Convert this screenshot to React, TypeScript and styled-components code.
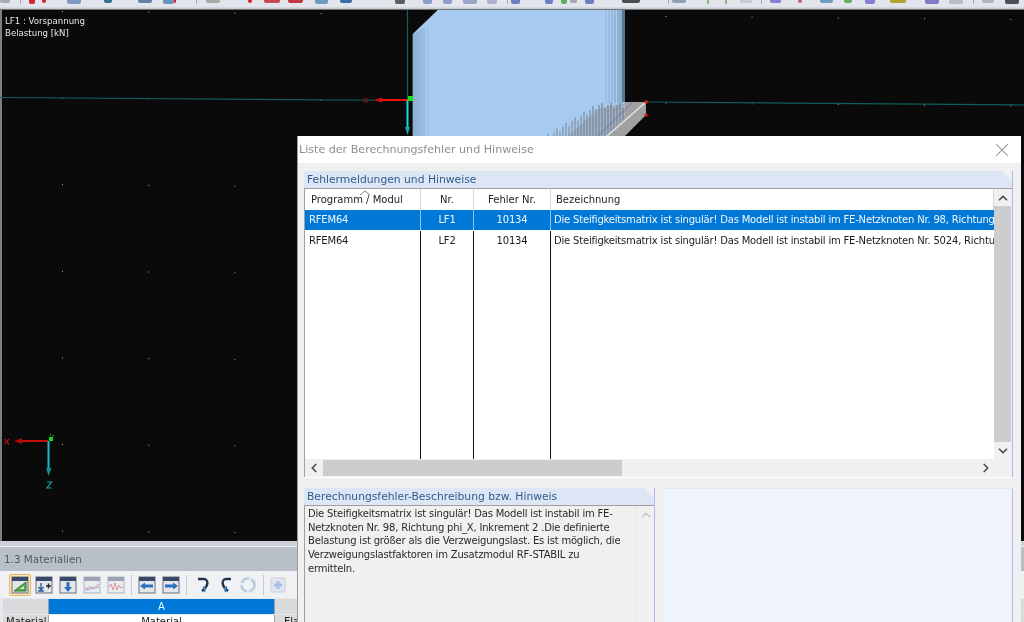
import React from 'react';
import styled, { createGlobalStyle } from 'styled-components';
import { ChevronUp, ChevronDown, ChevronLeft, ChevronRight, X } from 'lucide-react';

const GlobalStyle = createGlobalStyle`
  html, body { margin: 0; padding: 0; background: #000; overflow: hidden; }
  * { box-sizing: border-box; }
`;

const Page = styled.div`
  position: relative;
  width: 1024px;
  height: 622px;
  overflow: hidden;
  display: flex;
  flex-direction: column;
  font-family: 'DejaVu Sans', sans-serif;
  filter: blur(0.35px);
`;

/* main toolbar, only the lower edge of its icons is visible */
const TopBar = styled.div`
  height: 10px;
  flex-shrink: 0;
  display: flex;
  align-items: flex-start;
  background: linear-gradient(#e2e5ec 70%, #c4c8cf);
  border-bottom: 1px solid #6f7277;
  overflow: hidden;
`;

const TopGlyph = styled.div<{ $gap: number; $w: number; $h: number; $c: string }>`
  flex-shrink: 0;
  margin-left: ${(p) => p.$gap}px;
  width: ${(p) => p.$w}px;
  height: ${(p) => p.$h}px;
  background: ${(p) => p.$c};
  border-radius: 0 0 2px 2px;
`;

const topGlyphs: [number, number, string][] = [
  [0, 10, '#a8adb4'], [20, 1, '#a5a9b0'], [29, 6, '#d9232d'], [42, 4, '#d9232d'], [67, 14, '#7d9cc0'],
  [104, 8, '#34708f'], [138, 14, '#5f83ad'], [163, 11, '#6c93bd'], [174, 2, '#d9232d'], [196, 1, '#a5a9b0'],
  [206, 14, '#a8a8a4'], [248, 4, '#e0202a'], [264, 16, '#c8464e'], [288, 15, '#c23a40'], [315, 13, '#6d9cbf'],
  [340, 12, '#3a6ea8'], [395, 10, '#5d5f60'], [423, 9, '#8d9dc9'], [443, 9, '#8d9dc9'], [463, 14, '#9aa6c4'],
  [487, 10, '#aab2cc'], [507, 1, '#a5a9b0'], [511, 9, '#6d7fc0'], [545, 8, '#6d7fc0'], [561, 6, '#5cae5c'],
  [570, 7, '#a3a8b0'], [585, 9, '#6d7fc0'], [622, 18, '#4a4c4e'], [668, 1, '#a5a9b0'], [672, 14, '#8da2b8'],
  [707, 2, '#7ab87a'], [725, 2, '#7ab87a'], [740, 12, '#c5c9d0'], [761, 1, '#a5a9b0'], [770, 11, '#8080d8'],
  [798, 4, '#c06a6a'], [820, 13, '#6d9cbf'], [844, 8, '#62b060'], [865, 10, '#8080d8'], [890, 16, '#b5a030'],
  [925, 14, '#7c7cc8'], [949, 14, '#b5bcc8'], [973, 1, '#a5a9b0'], [982, 12, '#b0b4bc'], [1005, 14, '#4c5058'],
];

/* 3D viewport */
const Viewport = styled.div`
  position: relative;
  height: 531px;
  flex-shrink: 0;
  background: #0a0a0a;
  border-left: 2px solid #7c7f84;
`;

const Scene = styled.svg`
  position: absolute;
  left: -2px;
  top: 0;
  width: 1024px;
  height: 531px;
`;

const LoadLabel = styled.div`
  position: absolute;
  left: 3px;
  top: 5px;
  color: #e8e8e8;
  font-size: 8.6px;
  line-height: 12px;
`;

const toothXs = Array.from({ length: 26 }, (_, i) => 548 + i * 3);

const toothTop = (x: number, i: number) => Math.max(103, 134 - (x - 548) * 0.62) + (i % 3 === 1 ? 5 : i % 3 === 2 ? 2 : 0);

const ViewportScene = () => (
  <Scene viewBox="0 10 1024 531">
    {Array.from({ length: 12 }, (_, i) =>
      Array.from({ length: 7 }, (_, j) => (
        <rect key={`${i}-${j}`} x={62 + 86.2 * i} y={11 + 86.6 * j + i * 0.72} width="1" height="1" fill="#a8b0a8" />
      )),
    )}
    <line x1="0" y1="97.5" x2="415" y2="100.5" stroke="#0f5f5c" strokeWidth="1.2" />
    <line x1="646" y1="102" x2="1024" y2="105" stroke="#0f5f5c" strokeWidth="1.2" />
    <line x1="407.5" y1="10" x2="407.5" y2="100" stroke="#0f5f5c" strokeWidth="1.2" />

    <polygon points="413,34 438,10 625,10 625,136 413,136" fill="#a6caf0" />
    {[0, 2, 4, 6].map((k) => (
      <line key={k} x1={413 + k * 2} y1={34 - k * 0.2} x2={438 + k * 2} y2="10" stroke="#c8dbf1" strokeWidth="0.6" opacity={0.8 - k * 0.07} />
    ))}
    {[413, 415, 417, 419, 421, 423, 425, 428].map((x, i) => (
      <line key={x} x1={x} y1={34 - i * 1.2} x2={x} y2="136" stroke="#6f8fb0" strokeWidth="1" opacity={0.95 - i * 0.1} />
    ))}
    {[606, 609, 612, 615, 618, 620, 622].map((x, i) => (
      <line key={x} x1={x} y1="10" x2={x} y2="103" stroke="#6f8aa8" strokeWidth="1.2" opacity={0.25 + i * 0.1} />
    ))}
    <rect x="622" y="10" width="3" height="92" fill="#5d7690" />

    <polygon points="568,136 600,108 625,103 625,136" fill="#8d959c" opacity="0.45" />
    {toothXs.map((x, i) => (
      <line key={x} x1={x} y1={toothTop(x, i)} x2={x} y2="136" stroke="#7d8288" strokeWidth="1.4" opacity={0.6 + i * 0.012} />
    ))}
    <polygon points="607,136 625,118 625,102 646,102 646,115 625,136" fill="#a0a0a0" />
    <line x1="646" y1="102" x2="607" y2="136" stroke="#e2e2e2" strokeWidth="1.6" />
    <line x1="632" y1="103" x2="598" y2="136" stroke="#6a6ab0" strokeWidth="0.7" />
    <rect x="644.5" y="100.5" width="3" height="3" fill="#f01818" />
    <rect x="644.5" y="113.5" width="3" height="3" fill="#e81818" />

    <line x1="408" y1="100" x2="382" y2="100" stroke="#f00d0d" strokeWidth="2" />
    <polygon points="374,100 382,97.5 382,102.5" fill="#d00c0c" />
    <path d="M363.5 98l4 5M367.5 98l-4 5" stroke="#8a1414" strokeWidth="1.2" />
    <line x1="407.5" y1="100" x2="407.5" y2="128" stroke="#18d8e0" strokeWidth="2" />
    <polygon points="405,127 410,127 407.5,135" fill="#12a8ae" />
    <rect x="408" y="96" width="5" height="5" fill="#16e016" />

    <line x1="48" y1="441" x2="22" y2="441" stroke="#c80c0c" strokeWidth="2" />
    <polygon points="14,441 22,438 22,444" fill="#b00c0c" />
    <path d="M4.5 439l4.5 5.5M9 439l-4.5 5.5" stroke="#9c1212" strokeWidth="1.3" />
    <line x1="48.5" y1="441" x2="48.5" y2="469" stroke="#12c0c8" strokeWidth="2" />
    <polygon points="46,468 51.5,468 48.5,476" fill="#0e9096" />
    <rect x="49" y="437" width="4" height="4" fill="#18d818" />
    <path d="M52 437l2-2M50 436l1-2" stroke="#18a018" strokeWidth="1" />
    <path d="M47 482h4.5l-4.5 6h4.5" stroke="#12a4aa" strokeWidth="1.2" fill="none" />
  </Scene>
);

/* table panel below the viewport */
const BottomPanel = styled.div`
  flex: 1;
  background: #e6e8ec;
  border-top: 5px solid #cdd0d6;
  display: flex;
  flex-direction: column;
  position: relative;
`;

const PanelTitle = styled.div`
  height: 25px;
  flex-shrink: 0;
  background: #b9bfc9;
  color: #555a62;
  font-size: 10.4px;
  line-height: 25px;
  padding-left: 4px;
  border-top: 1px solid #eef0f3;
`;

const PanelTools = styled.div`
  height: 27px;
  flex-shrink: 0;
  display: flex;
  align-items: center;
  padding-left: 9px;
  background: #eff1f5;
`;

const ToolButton = styled.div<{ $active?: boolean; $gap?: number; $faded?: boolean }>`
  width: 22px;
  height: 22px;
  flex-shrink: 0;
  margin-left: ${(p) => p.$gap ?? 2}px;
  display: flex;
  align-items: center;
  justify-content: center;
  opacity: ${(p) => (p.$faded ? 0.45 : 1)};
  border: 1px solid ${(p) => (p.$active ? '#e8b860' : 'transparent')};
  background: ${(p) => (p.$active ? '#fbe7b8' : 'transparent')};
  border-radius: 2px;
`;

const ToolSep = styled.div`
  width: 1px;
  height: 20px;
  flex-shrink: 0;
  margin-left: 4px;
  background: #c4c8d0;
`;

const SheetRow = styled.div`
  display: grid;
  grid-template-columns: 45px 225px 1fr;
  gap: 1px;
  height: 15px;
  flex-shrink: 0;
  margin-left: 3px;
  margin-top: 1px;
  background: #9ca0a6;
`;

const SheetHead = styled.div<{ $blue?: boolean }>`
  background: ${(p) => (p.$blue ? '#0078d7' : '#d9dadc')};
  color: #dff;
  font-size: 10px;
  line-height: 15px;
  text-align: center;
  overflow: hidden;
`;

const SheetCell = styled.div<{ $head?: boolean; $pad?: number }>`
  background: ${(p) => (p.$head ? '#d9dadc' : '#fff')};
  color: #222;
  font-size: 10px;
  line-height: 14px;
  text-align: ${(p) => (p.$pad !== undefined ? 'left' : 'center')};
  padding-left: ${(p) => p.$pad ?? 0}px;
  overflow: hidden;
  white-space: nowrap;
`;

/* dialog */
const Dialog = styled.div`
  position: absolute;
  left: 297px;
  top: 136px;
  width: 724px;
  height: 486px;
  background: #f0f0f0;
  border-left: 1px solid #9a9a9a;
  display: flex;
  flex-direction: column;
`;

const DialogTitle = styled.div`
  height: 27px;
  flex-shrink: 0;
  background: #fff;
  color: #8e8e8e;
  font-size: 11.1px;
  line-height: 27px;
  padding-left: 1px;
  display: flex;
  justify-content: space-between;
  align-items: center;
  padding-right: 8px;
`;

const DialogBody = styled.div`
  flex: 1;
  padding: 8px 8px 0 6px;
  display: flex;
  flex-direction: column;
  min-height: 0;
`;

const SectionHead = styled.div`
  height: 17px;
  flex-shrink: 0;
  background: #dde6f5;
  color: #2f5b8e;
  font-size: 10.75px;
  line-height: 17px;
  padding-left: 3px;
  clip-path: polygon(0 0, calc(100% - 10px) 0, 100% 10px, 100% 100%, 0 100%);
  white-space: nowrap;
`;

const ListSection = styled.section`
  flex-shrink: 0;
  border-right: 1px solid #b4b4fa;
  border-bottom: 1px solid #fff;
`;

const ListBox = styled.div`
  border-left: 1px solid #a0a0a0;
  border-top: 1px solid #a0a0a0;
  display: grid;
  grid-template-columns: 689px 17px;
  grid-template-rows: 270px 18px;
`;

const Table = styled.div`
  background: #fff;
  overflow: hidden;
  display: flex;
  flex-direction: column;
  position: relative;
`;

const TableRow = styled.div<{ $h?: number; $fill?: boolean }>`
  display: grid;
  grid-template-columns: 116px 53px 77px 443px;
  flex: ${(p) => (p.$fill ? 1 : 'none')};
  height: ${(p) => (p.$h ? `${p.$h}px` : 'auto')};
`;

const HeadCell = styled.div<{ $center?: boolean; $pad?: number }>`
  font-size: 10px;
  line-height: 21px;
  color: #222;
  text-align: ${(p) => (p.$center ? 'center' : 'left')};
  padding-left: ${(p) => p.$pad ?? 0}px;
  border-right: 1px solid #d8d8d8;
`;

const BodyCell = styled.div<{ $selected?: boolean; $center?: boolean; $pad?: number; $last?: boolean }>`
  font-size: 10px;
  letter-spacing: -0.19px;
  line-height: 20px;
  white-space: nowrap;
  overflow: hidden;
  text-align: ${(p) => (p.$center ? 'center' : 'left')};
  padding-left: ${(p) => p.$pad ?? 0}px;
  color: ${(p) => (p.$selected ? '#f2f8ff' : '#1a1a1a')};
  background: ${(p) => (p.$selected ? '#0078d7' : '#fff')};
  border-right: ${(p) => (p.$last ? 'none' : `1px solid ${p.$selected ? '#8cc4f0' : '#111'}`)};
  margin-bottom: ${(p) => (p.$selected ? 1 : 0)}px;
`;

const FillCell = styled.div`
  border-right: 1px solid #111;
  &:last-child { border-right: none; }
`;

const SortCaret = styled.svg`
  position: absolute;
  left: 54px;
  top: 1px;
`;

const VScroll = styled.div`
  background: #f0f0f0;
  display: flex;
  flex-direction: column;
  align-items: center;
  justify-content: space-between;
  color: #505050;
`;

const VThumb = styled.div`
  flex: 1;
  width: 17px;
  background: #cdcdcd;
`;

const ArrowCell = styled.div`
  height: 17px;
  width: 17px;
  flex-shrink: 0;
  display: flex;
  align-items: center;
  justify-content: center;
`;

const HScroll = styled.div`
  background: #f0f0f0;
  display: flex;
  align-items: center;
  justify-content: space-between;
  color: #505050;
`;

const HTrack = styled.div`
  flex: 1;
  height: 16px;
`;

const HThumb = styled.div`
  width: 299px;
  height: 16px;
  margin-left: 1px;
  background: #cdcdcd;
`;

const Corner = styled.div`
  background: #f0f0f0;
`;

const LowerRow = styled.div`
  flex: 1;
  margin-top: 10px;
  display: flex;
  gap: 8px;
  min-height: 0;
`;

const HintSection = styled.section`
  width: 351px;
  flex-shrink: 0;
  display: flex;
  flex-direction: column;
  border-right: 1px solid #b4b4fa;
`;

const HintBox = styled.div`
  flex: 1;
  border-left: 1px solid #a0a0a0;
  border-top: 1px solid #a0a0a0;
  display: grid;
  grid-template-columns: 1fr 18px;
`;

const HintText = styled.div`
  font-size: 10px;
  letter-spacing: -0.19px;
  line-height: 13.7px;
  color: #2a2a2a;
  padding: 1px 10px 0 3px;
`;

const HintScroll = styled.div`
  border-left: 1px solid #e6e6e6;
  color: #c4c4c4;
  display: flex;
  flex-direction: column;
  align-items: center;
`;

const PreviewPanel = styled.div`
  flex: 1;
  background: #eff3fa;
  border-top: 1px solid #dde6f5;
  border-right: 1px solid #b4b4fa;
`;

const IconTable = ({ children }: { children: React.ReactNode }) => (
  <svg width="18" height="18" viewBox="0 0 18 18">
    <rect x="1" y="1" width="16" height="16" fill="#e4e6ea" stroke="#6a6e74" />
    <rect x="1" y="1" width="16" height="4" fill="#38486a" />
    {children}
  </svg>
);

const COLUMNS = ['Programm / Modul', 'Nr.', 'Fehler Nr.', 'Bezeichnung'];

const ROWS = [
  {
    program: 'RFEM64',
    nr: 'LF1',
    code: '10134',
    text: 'Die Steifigkeitsmatrix ist singulär! Das Modell ist instabil im FE-Netzknoten Nr. 98, Richtung phi_X, Inkrement 2',
  },
  {
    program: 'RFEM64',
    nr: 'LF2',
    code: '10134',
    text: 'Die Steifigkeitsmatrix ist singulär! Das Modell ist instabil im FE-Netzknoten Nr. 5024, Richtung phi_X, Inkrement 2',
  },
];

export default function App() {
  return (
    <Page>
      <GlobalStyle />
      <TopBar>
        {topGlyphs.map(([x, w, c], i) => {
          const prev = i === 0 ? 0 : topGlyphs[i - 1][0] + topGlyphs[i - 1][1];
          return <TopGlyph key={x} $gap={x - prev} $w={w} $h={w === 1 ? 4 : 3 + (x % 2)} $c={c} />;
        })}
      </TopBar>

      <Viewport>
        <ViewportScene />
        <LoadLabel>
          LF1 : Vorspannung
          <br />
          Belastung [kN]
        </LoadLabel>
      </Viewport>

      <BottomPanel>
        <PanelTitle>1.3 Materialien</PanelTitle>
        <PanelTools>
          <ToolButton $active $gap={0}>
            <IconTable>
              <polygon points="3,15 15,15 15,6" fill="#58b04c" stroke="#2e7a2a" />
              <polygon points="9,13 13,13 13,10" fill="#e4e6ea" />
            </IconTable>
          </ToolButton>
          <ToolButton>
            <IconTable>
              <path d="M6 7v6M3.5 11L6 14l2.5-3M3 15h6" stroke="#2f5f9e" fill="none" strokeWidth="1.4" />
              <path d="M11 10h5M13.5 7.5v5" stroke="#2a2a2a" strokeWidth="1.4" />
            </IconTable>
          </ToolButton>
          <ToolButton>
            <IconTable>
              <path d="M9 6v8" stroke="#2f6fc0" strokeWidth="3" />
              <polygon points="5,11 13,11 9,16" fill="#2f6fc0" />
            </IconTable>
          </ToolButton>
          <ToolButton $faded>
            <IconTable>
              <path d="M2 13l5-2 4 1 5-4" stroke="#c03040" fill="none" />
              <path d="M2 14l6-1 8-2" stroke="#3050c0" fill="none" />
            </IconTable>
          </ToolButton>
          <ToolButton $faded>
            <IconTable>
              <path d="M2 11l2-3 2 6 2-7 2 7 2-5 2 3 2-1" stroke="#d02030" fill="none" />
            </IconTable>
          </ToolButton>
          <ToolSep />
          <ToolButton $gap={4}>
            <IconTable>
              <path d="M4 10h11" stroke="#2f6fc0" strokeWidth="3" />
              <polygon points="2,10 7,6.5 7,13.5" fill="#2f6fc0" />
            </IconTable>
          </ToolButton>
          <ToolButton>
            <IconTable>
              <path d="M3 10h11" stroke="#2f6fc0" strokeWidth="3" />
              <polygon points="16,10 11,6.5 11,13.5" fill="#2f6fc0" />
            </IconTable>
          </ToolButton>
          <ToolSep />
          <ToolButton $gap={6}>
            <svg width="18" height="18" viewBox="0 0 18 18">
              <path d="M3 3h6c3 0 4 3 3 6-1 3-2 4-5 6" stroke="#24364f" strokeWidth="2.4" fill="none" />
              <path d="M8 11c2 1 3 2 1 5" stroke="#3f86c8" strokeWidth="2" fill="none" />
            </svg>
          </ToolButton>
          <ToolButton $gap={0}>
            <svg width="18" height="18" viewBox="0 0 18 18">
              <path d="M14 3H9C6 3 5 6 6 9c1 3 2 4 5 6" stroke="#24364f" strokeWidth="2.4" fill="none" />
              <path d="M10 11c-2 1-3 2-1 5" stroke="#3f86c8" strokeWidth="2" fill="none" />
            </svg>
          </ToolButton>
          <ToolButton $faded $gap={0}>
            <svg width="18" height="18" viewBox="0 0 18 18">
              <circle cx="9" cy="9" r="6.5" stroke="#7a9cc0" strokeWidth="2.6" fill="none" strokeDasharray="9 2" />
            </svg>
          </ToolButton>
          <ToolSep />
          <ToolButton $faded $gap={3}>
            <svg width="18" height="18" viewBox="0 0 18 18">
              <rect x="2" y="2" width="14" height="14" fill="#d0d8e8" stroke="#a0a8b8" />
              <path d="M5 9h8M9 5v8" stroke="#4f86d0" strokeWidth="3" />
            </svg>
          </ToolButton>
        </PanelTools>
        <SheetRow>
          <SheetHead />
          <SheetHead $blue>A</SheetHead>
          <SheetHead />
        </SheetRow>
        <SheetRow>
          <SheetCell $head $pad={3}>Material</SheetCell>
          <SheetCell>Material</SheetCell>
          <SheetCell $head $pad={9}>Elastizität</SheetCell>
        </SheetRow>
      </BottomPanel>

      <Dialog>
        <DialogTitle>
          Liste der Berechnungsfehler und Hinweise
          <X size={22} strokeWidth={1.1} color="#8a8a8a" />
        </DialogTitle>
        <DialogBody>
          <ListSection>
            <SectionHead>Fehlermeldungen und Hinweise</SectionHead>
            <ListBox>
              <Table>
                <SortCaret width="12" height="6" viewBox="0 0 12 6">
                  <path d="M1 5l5-4 5 4" stroke="#8a8a8a" fill="none" />
                </SortCaret>
                <TableRow $h={21}>
                  <HeadCell $pad={6}>{COLUMNS[0]}</HeadCell>
                  <HeadCell $center>{COLUMNS[1]}</HeadCell>
                  <HeadCell $center>{COLUMNS[2]}</HeadCell>
                  <HeadCell $pad={5}>{COLUMNS[3]}</HeadCell>
                </TableRow>
                {ROWS.map((row, i) => (
                  <TableRow key={row.nr} $h={21}>
                    <BodyCell $selected={i === 0} $pad={4}>{row.program}</BodyCell>
                    <BodyCell $selected={i === 0} $center>{row.nr}</BodyCell>
                    <BodyCell $selected={i === 0} $center>{row.code}</BodyCell>
                    <BodyCell $selected={i === 0} $pad={3} $last>{row.text}</BodyCell>
                  </TableRow>
                ))}
                <TableRow $fill>
                  <FillCell />
                  <FillCell />
                  <FillCell />
                  <FillCell />
                </TableRow>
              </Table>
              <VScroll>
                <ArrowCell><ChevronUp size={14} strokeWidth={3} /></ArrowCell>
                <VThumb />
                <ArrowCell><ChevronDown size={14} strokeWidth={3} /></ArrowCell>
              </VScroll>
              <HScroll>
                <ArrowCell><ChevronLeft size={14} strokeWidth={3} /></ArrowCell>
                <HThumb />
                <HTrack />
                <ArrowCell><ChevronRight size={14} strokeWidth={3} /></ArrowCell>
              </HScroll>
              <Corner />
            </ListBox>
          </ListSection>
          <LowerRow>
            <HintSection>
              <SectionHead>Berechnungsfehler-Beschreibung bzw. Hinweis</SectionHead>
              <HintBox>
                <HintText>
                  Die Steifigkeitsmatrix ist singulär! Das Modell ist instabil im FE-Netzknoten Nr. 98, Richtung phi_X, Inkrement 2 .Die definierte Belastung ist größer als die Verzweigungslast. Es ist möglich, die Verzweigungslastfaktoren im Zusatzmodul RF-STABIL zu ermitteln.
                </HintText>
                <HintScroll>
                  <ArrowCell><ChevronUp size={14} strokeWidth={2.6} /></ArrowCell>
                </HintScroll>
              </HintBox>
            </HintSection>
            <PreviewPanel />
          </LowerRow>
        </DialogBody>
      </Dialog>
    </Page>
  );
}
